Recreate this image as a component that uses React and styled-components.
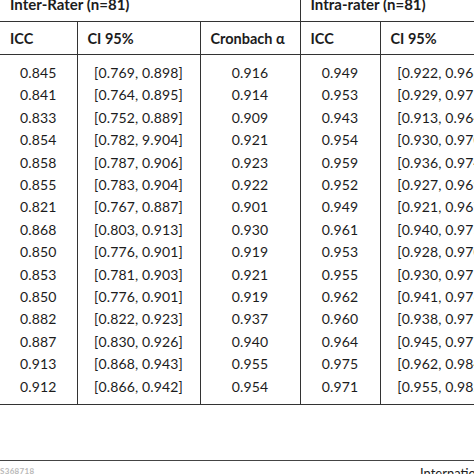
import styled, { createGlobalStyle } from 'styled-components';

const GlobalStyle = createGlobalStyle`
  html, body {
    margin: 0;
    padding: 0;
    background: #fff;
    overflow: hidden;
  }
  body {
    width: 474px;
    height: 474px;
    font-family: Lato, "Open Sans", sans-serif;
    color: #1c1c1c;
  }
`;

const rows = [
  ['0.845', '[0.769, 0.898]', '0.916', '0.949', '[0.922, 0.966]'],
  ['0.841', '[0.764, 0.895]', '0.914', '0.953', '[0.929, 0.971]'],
  ['0.833', '[0.752, 0.889]', '0.909', '0.943', '[0.913, 0.964]'],
  ['0.854', '[0.782, 9.904]', '0.921', '0.954', '[0.930, 0.970]'],
  ['0.858', '[0.787, 0.906]', '0.923', '0.959', '[0.936, 0.974]'],
  ['0.855', '[0.783, 0.904]', '0.922', '0.952', '[0.927, 0.969]'],
  ['0.821', '[0.767, 0.887]', '0.901', '0.949', '[0.921, 0.967]'],
  ['0.868', '[0.803, 0.913]', '0.930', '0.961', '[0.940, 0.975]'],
  ['0.850', '[0.776, 0.901]', '0.919', '0.953', '[0.928, 0.970]'],
  ['0.853', '[0.781, 0.903]', '0.921', '0.955', '[0.930, 0.971]'],
  ['0.850', '[0.776, 0.901]', '0.919', '0.962', '[0.941, 0.976]'],
  ['0.882', '[0.822, 0.923]', '0.937', '0.960', '[0.938, 0.975]'],
  ['0.887', '[0.830, 0.926]', '0.940', '0.964', '[0.945, 0.977]'],
  ['0.913', '[0.868, 0.943]', '0.955', '0.975', '[0.962, 0.984]'],
  ['0.912', '[0.866, 0.942]', '0.954', '0.971', '[0.955, 0.982]'],
];

const colWidths = [77, 123, 100, 80, 123];
// columns that start with a rule on their left edge
const ruled = [false, true, true, true, true];

const Page = styled.div`
  width: 474px;
  overflow: hidden;
`;

const Table = styled.table`
  border-collapse: collapse;
  table-layout: fixed;
  width: 503px;
  margin-top: -6px;
`;

const GroupCell = styled.th`
  font-size: 15px;
  font-weight: 700;
  text-align: left;
  line-height: 15px;
  padding: 3px 0 9px 10px;
  white-space: nowrap;
  border-bottom: 1px solid #333;
  border-left: ${p => (p.$ruled ? '1px solid #333' : 'none')};
`;

const HeadCell = styled.th`
  font-size: 14.5px;
  font-weight: 700;
  text-align: left;
  height: 32px;
  padding: 0 0 0 10px;
  white-space: nowrap;
  border-bottom: 1px solid #333;
  border-left: ${p => (p.$ruled ? '1px solid #333' : 'none')};
`;

const Cell = styled.td`
  font-size: 14px;
  letter-spacing: 0.15px;
  text-align: center;
  white-space: nowrap;
  height: 22.4px;
  line-height: 22.4px;
  padding: ${p => (p.$first ? '7px 0 0' : p.$last ? '0 0 6px' : '0')};
  border-left: ${p => (p.$ruled ? '1px solid #333' : 'none')};
  border-bottom: ${p => (p.$last ? '1px solid #333' : 'none')};
`;

const Footer = styled.div`
  margin-top: 55px;
  border-top: 1.5px solid #444;
  display: flex;
  align-items: flex-start;
  white-space: nowrap;
`;

const DocId = styled.span`
  flex: 0 0 420px;
  font-size: 8px;
  font-weight: 700;
  color: #b9b9b9;
  padding-top: 5px;
  letter-spacing: 0.3px;
`;

const Journal = styled.span`
  font-size: 13px;
  color: #222;
  padding-top: 4px;
`;

export default function App() {
  return (
    <Page>
      <GlobalStyle />
      <Table>
        <colgroup>
          {colWidths.map((w, i) => (
            <col key={i} style={{ width: w }} />
          ))}
        </colgroup>
        <thead>
          <tr>
            <GroupCell colSpan={3}>Inter-Rater (n=81)</GroupCell>
            <GroupCell colSpan={2} $ruled>Intra-rater (n=81)</GroupCell>
          </tr>
          <tr>
            <HeadCell>ICC</HeadCell>
            <HeadCell $ruled>CI 95%</HeadCell>
            <HeadCell $ruled>Cronbach α</HeadCell>
            <HeadCell $ruled>ICC</HeadCell>
            <HeadCell $ruled>CI 95%</HeadCell>
          </tr>
        </thead>
        <tbody>
          {rows.map((r, i) => (
            <tr key={i}>
              {r.map((v, j) => (
                <Cell
                  key={j}
                  $ruled={ruled[j]}
                  $first={i === 0}
                  $last={i === rows.length - 1}
                >
                  {v}
                </Cell>
              ))}
            </tr>
          ))}
        </tbody>
      </Table>
      <Footer>
        <DocId>S368718</DocId>
        <Journal>International Journal of General Medicine</Journal>
      </Footer>
    </Page>
  );
}
